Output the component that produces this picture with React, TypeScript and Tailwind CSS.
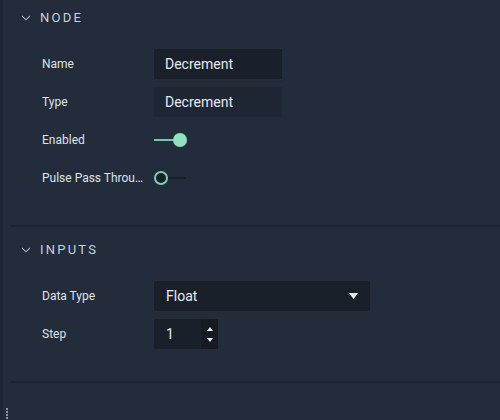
import React from "react";

const font = { fontFamily: "Roboto, 'Liberation Sans', sans-serif" };

function Chevron() {
  return (
    <svg width="10" height="6" viewBox="0 0 10 6" className="shrink-0">
      <path d="M1 0.8 L5 4.8 L9 0.8" fill="none" stroke="#aab3bf" strokeWidth="1.1" />
    </svg>
  );
}

function Header({ title }: { title: string }) {
  return (
    <div className="h-[36px] flex items-center pl-[21px] gap-[9px]">
      <Chevron />
      <span className="text-[13px] tracking-[0.17em] text-[#c9d1db] font-normal">{title}</span>
    </div>
  );
}

function Row({ label, children }: { label: string; children: React.ReactNode }) {
  return (
    <div className="h-[38px] flex items-center">
      <div className="w-[154px] pl-[42px] pr-[10px] shrink-0 text-[12px] text-[#dde3ea] truncate whitespace-nowrap">
        {label}
      </div>
      <div className="flex items-center">{children}</div>
    </div>
  );
}

export default function App() {
  return (
    <div
      className="relative w-[500px] h-[420px] bg-[#222c3b] border-l-[3px] border-[#1e2733] overflow-hidden"
      style={font}
    >
      <div className="-ml-[3px]">
        <Header title="NODE" />
        <div className="mt-[9px]">
          <Row label="Name">
            <div className="w-[128px] h-[30px] bg-[#1a202a] flex items-center pl-[11px] text-[14px] text-[#e6eaef]">
              Decrement
            </div>
          </Row>
          <Row label="Type">
            <div className="w-[128px] h-[30px] bg-[#1e2634] flex items-center pl-[11px] text-[14px] text-[#e6eaef]">
              Decrement
            </div>
          </Row>
          <Row label="Enabled">
            <div className="flex items-center">
              <div className="w-[20px] h-[2px] bg-[#6fcea4]" />
              <div className="w-[14px] h-[14px] rounded-full bg-[#8ee2bd] -ml-[1px]" />
            </div>
          </Row>
          <Row label="Pulse Pass Through">
            <div className="flex items-center">
              <div className="w-[14px] h-[14px] rounded-full bg-[#1a1f28] border-2 border-[#7ad1a9]" />
              <div className="w-[18px] h-[2px] bg-[#1a1f28]" />
            </div>
          </Row>
        </div>
        <div className="h-[28px]" />
        <div className="ml-[10px] h-[2px] bg-[#1c2430]" />
        <div className="h-[5px]" />
        <Header title="INPUTS" />
        <div className="mt-[9px]">
          <Row label="Data Type">
            <div className="w-[216px] h-[30px] bg-[#1a202a] rounded-[2px] flex items-center justify-between pl-[12px] pr-[12px] text-[14px] text-[#e6eaef]">
              <span>Float</span>
              <svg width="9" height="6" viewBox="0 0 9 6">
                <path d="M0 0 H9 L4.5 6 Z" fill="#e6eaef" />
              </svg>
            </div>
          </Row>
          <Row label="Step">
            <div className="w-[64px] h-[30px] bg-[#1a202a] flex items-stretch text-[14px] text-[#e6eaef]">
              <div className="flex-1 flex items-center pl-[12px]">1</div>
              <div className="w-[17px] bg-[#161b23] flex flex-col items-center justify-center gap-[7px]">
                <svg width="6" height="4" viewBox="0 0 6 4">
                  <path d="M0 4 H6 L3 0 Z" fill="#e6eaef" />
                </svg>
                <svg width="6" height="4" viewBox="0 0 6 4">
                  <path d="M0 0 H6 L3 4 Z" fill="#e6eaef" />
                </svg>
              </div>
            </div>
          </Row>
        </div>
        <div className="h-[28px]" />
        <div className="ml-[10px] h-[2px] bg-[#1c2430]" />
      </div>
      <div className="absolute left-[3px] bottom-[1px] flex flex-col gap-[1px]">
        <div className="w-[2px] h-[2px] bg-[#8a93a0]" />
        <div className="w-[2px] h-[2px] bg-[#8a93a0]" />
        <div className="w-[2px] h-[2px] bg-[#8a93a0]" />
        <div className="w-[2px] h-[2px] bg-[#8a93a0]" />
      </div>
    </div>
  );
}
